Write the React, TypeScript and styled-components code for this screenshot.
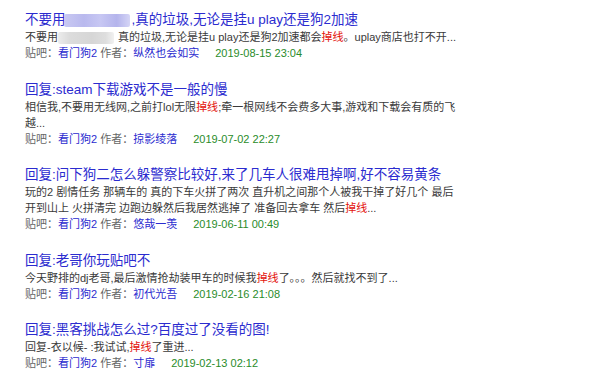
import { createGlobalStyle, styled } from 'styled-components'

const GlobalStyle = createGlobalStyle`
  html, body {
    margin: 0;
    padding: 0;
    background: #fff;
  }
  body {
    font-family: 'Liberation Sans', 'Noto Sans CJK SC', sans-serif;
  }
`

const Page = styled.div`
  width: 600px;
  height: 379px;
  overflow: hidden;
  padding: 10px 0 0 25px;
  box-sizing: border-box;
`

const Item = styled.div`
  display: flex;
  flex-direction: column;
  margin-bottom: 18.5px;
`

const Title = styled.div`
  font-size: 13.5px;
  line-height: 19px;
  color: #2b2bcf;
  white-space: nowrap;
`

const Line = styled.div`
  font-size: 11px;
  line-height: 16px;
  color: #3a3a3a;
  white-space: nowrap;
`

const Hit = styled.span`
  color: #e3120b;
`

const Meta = styled.div`
  display: flex;
  align-items: center;
  font-size: 11px;
  line-height: 16px;
  color: #666;
  white-space: nowrap;
`

const MetaLink = styled.span`
  color: #2b2bcf;
`

const Date = styled.span`
  color: #2a8c2a;
  margin-left: 16px;
`

const Mask = styled.span<{ $w: number; $h: number; $tone: 'blue' | 'gray' }>`
  display: inline-block;
  vertical-align: middle;
  width: ${(p) => p.$w}px;
  height: ${(p) => p.$h}px;
  margin-left: ${(p) => (p.$tone === 'blue' ? -2 : 0)}px;
  margin-right: ${(p) => (p.$tone === 'blue' ? 2 : 4)}px;
  border-radius: 2px;
  background: ${(p) =>
    p.$tone === 'blue'
      ? 'linear-gradient(90deg, #c9c9f2 0%, #b9b9ee 30%, #c7c7f3 55%, #b4b4ec 80%, #d5d5f6 100%)'
      : 'linear-gradient(90deg, #ececec 0%, #dcdcdc 20%, #d6d6d6 60%, #dedede 85%, #f1f1f1 100%)'};
  filter: blur(0.6px);
`

type TPost = {
  title: React.ReactNode
  lines: React.ReactNode[]
  author: string
  date: string
}

const posts: TPost[] = [
  {
    title: (
      <>
        不要用<Mask $w={66} $h={13} $tone='blue' />,真的垃圾,无论是挂u play还是狗2加速
      </>
    ),
    lines: [
      <>
        不要用<Mask $w={56} $h={12} $tone='gray' />真的垃圾,无论是挂u play还是狗2加速都会<Hit>掉线</Hit>。uplay商店也打不开...
      </>,
    ],
    author: '纵然也会如实',
    date: '2019-08-15 23:04',
  },
  {
    title: '回复:steam下载游戏不是一般的慢',
    lines: [
      <>
        相信我,不要用无线网,之前打lol无限<Hit>掉线</Hit>;牵一根网线不会费多大事,游戏和下载会有质的飞
      </>,
      '越...',
    ],
    author: '掠影绫落',
    date: '2019-07-02 22:27',
  },
  {
    title: '回复:问下狗二怎么躲警察比较好,来了几车人很难甩掉啊,好不容易黄条',
    lines: [
      '玩的2 剧情任务 那辆车的 真的下车火拼了两次 直升机之间那个人被我干掉了好几个 最后',
      <>
        开到山上 火拼清完 边跑边躲然后我居然逃掉了 准备回去拿车 然后<Hit>掉线</Hit>...
      </>,
    ],
    author: '悠哉一羡',
    date: '2019-06-11 00:49',
  },
  {
    title: '回复:老哥你玩贴吧不',
    lines: [
      <>
        今天野排的dj老哥,最后激情抢劫装甲车的时候我<Hit>掉线</Hit>了。。。然后就找不到了...
      </>,
    ],
    author: '初代光吾',
    date: '2019-02-16 21:08',
  },
  {
    title: '回复:黑客挑战怎么过?百度过了没看的图!',
    lines: [
      <>
        回复-衣以候- :我试试,<Hit>掉线</Hit>了重进...
      </>,
    ],
    author: '寸扉',
    date: '2019-02-13 02:12',
  },
]

export default function App() {
  return (
    <>
      <GlobalStyle />
      <Page>
        {posts.map((post, i) => (
          <Item key={i}>
            <Title>{post.title}</Title>
            {post.lines.map((line, j) => (
              <Line key={j}>{line}</Line>
            ))}
            <Meta>
              贴吧：<MetaLink>看门狗2</MetaLink>&nbsp;作者：<MetaLink>{post.author}</MetaLink>
              <Date>{post.date}</Date>
            </Meta>
          </Item>
        ))}
      </Page>
    </>
  )
}
